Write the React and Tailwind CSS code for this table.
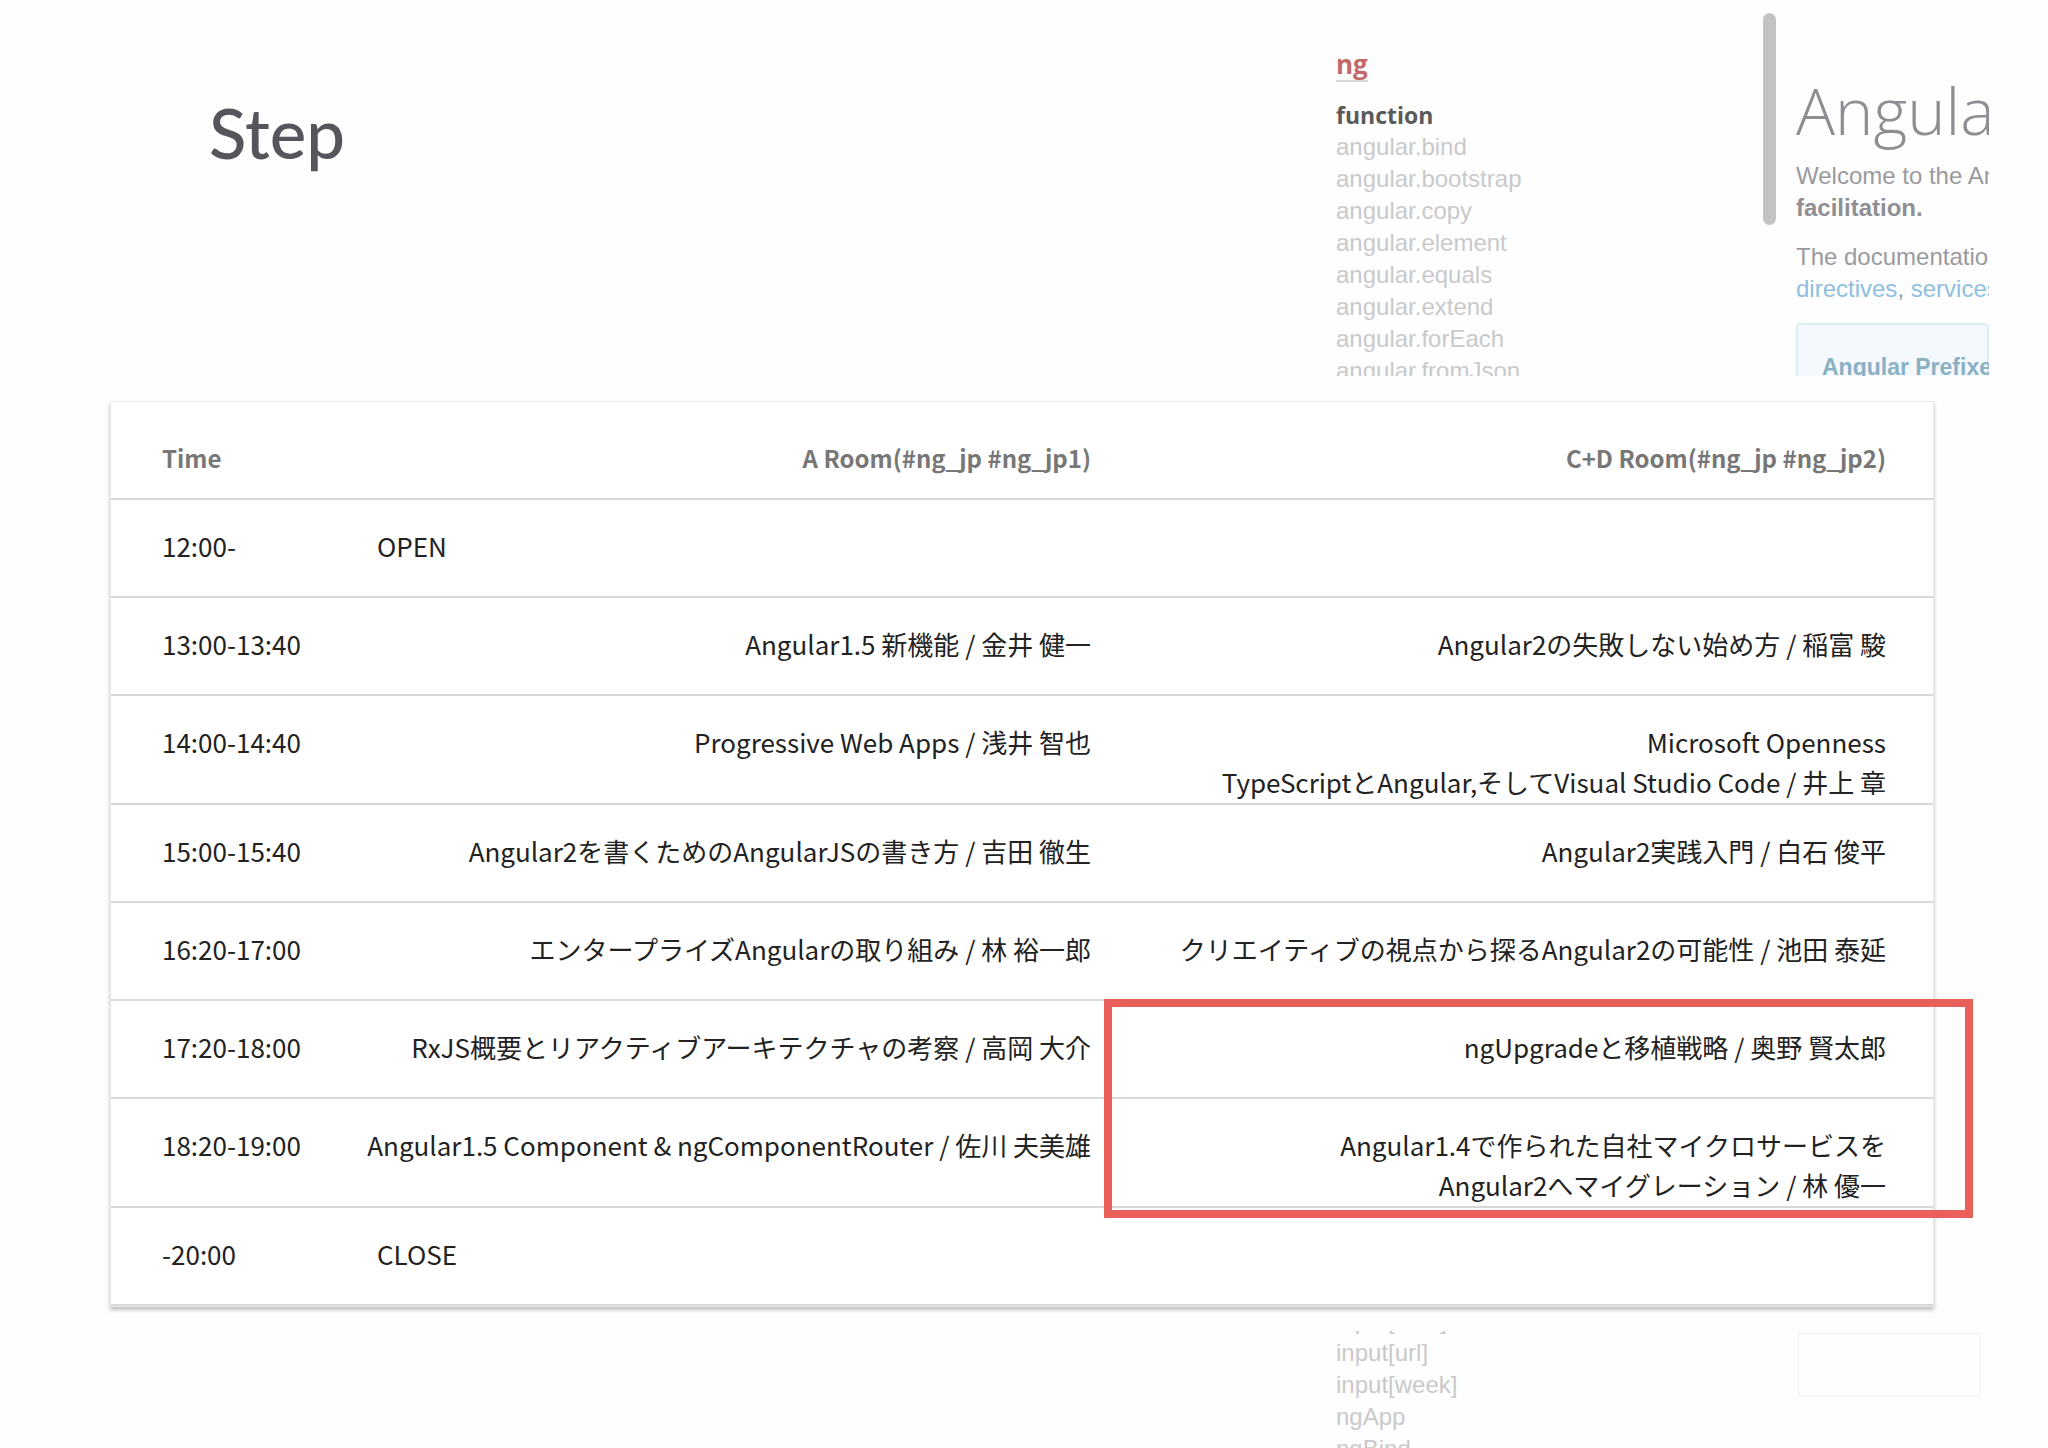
import React from 'react';

const sessions = [
  { time: '12:00-', single: 'OPEN' },
  { time: '13:00-13:40', a: ['Angular1.5 新機能 / 金井 健一'], b: ['Angular2の失敗しない始め方 / 稲富 駿'] },
  {
    time: '14:00-14:40',
    a: ['Progressive Web Apps / 浅井 智也'],
    b: ['Microsoft Openness', 'TypeScriptとAngular,そしてVisual Studio Code / 井上 章'],
  },
  { time: '15:00-15:40', a: ['Angular2を書くためのAngularJSの書き方 / 吉田 徹生'], b: ['Angular2実践入門 / 白石 俊平'] },
  { time: '16:20-17:00', a: ['エンタープライズAngularの取り組み / 林 裕一郎'], b: ['クリエイティブの視点から探るAngular2の可能性 / 池田 泰延'] },
  { time: '17:20-18:00', a: ['RxJS概要とリアクティブアーキテクチャの考察 / 高岡 大介'], b: ['ngUpgradeと移植戦略 / 奥野 賢太郎'] },
  {
    time: '18:20-19:00',
    a: ['Angular1.5 Component & ngComponentRouter / 佐川 夫美雄'],
    b: ['Angular1.4で作られた自社マイクロサービスを', 'Angular2へマイグレーション / 林 優一'],
  },
  { time: '-20:00', single: 'CLOSE' },
];

const apiItems = [
  'angular.bind',
  'angular.bootstrap',
  'angular.copy',
  'angular.element',
  'angular.equals',
  'angular.extend',
  'angular.forEach',
  'angular.fromJson',
];

const bottomItems = ['input[time]', 'input[url]', 'input[week]', 'ngApp', 'ngBind'];

function DocsBackdrop() {
  return (
    <div className="flex h-[376px] overflow-hidden">
      {/* side nav of the docs page */}
      <div className="w-[427px] pt-[48px]">
        <div className="inline-block border-b-2 border-[#d8d8d8] font-['Open_Sans',sans-serif] text-[26px] font-bold leading-[32px] text-[#c26a6a]">
          ng
        </div>
        <div className="mt-[17px] font-['Open_Sans',sans-serif] text-[23px] font-bold leading-[32px] text-[#5a5a5a]">
          function
        </div>
        <ul className="font-['Liberation_Sans',sans-serif] text-[24px] leading-[32px] text-[#c9c9cc]">
          {apiItems.map((item) => (
            <li key={item}>{item}</li>
          ))}
        </ul>
      </div>

      {/* scrollbar */}
      <div className="mt-[13px] h-[212px] w-[13px] rounded-full bg-[#c3c3c6]" />

      {/* docs main column, cut off at the right */}
      <div className="ml-[20px] w-[193px] overflow-hidden whitespace-nowrap pt-[76px]">
        <div className="font-['Open_Sans',sans-serif] text-[65px] font-light leading-[68px] text-[#8d8d92]">Angular</div>
        <div className="mt-[16px] font-['Liberation_Sans',sans-serif] text-[24px] leading-[32px] text-[#9a9a9e]">
          <p>Welcome to the AngularJS API docs</p>
          <p className="font-bold text-[#8f8f93]">facilitation.</p>
          <p className="mt-[17px]">The documentation is organized</p>
          <p className="text-[#8fbfe0]">
            directives<span className="text-[#9a9a9e]">, </span>services
          </p>
        </div>
        <div className="mt-[18px] h-[80px] rounded-[4px] border-2 border-[#dbeef4] bg-[#f3f9fc] pl-[24px] pt-[26px] font-['Liberation_Sans',sans-serif] text-[23px] font-bold leading-[32px] text-[#8ab0c4]">
          Angular Prefixes
        </div>
      </div>
    </div>
  );
}

function Cell({ lines }) {
  return (
    <div className="flex flex-col items-end">
      {lines.map((line) => (
        <p key={line} className="whitespace-nowrap">
          {line}
        </p>
      ))}
    </div>
  );
}

function ScheduleTable() {
  return (
    <div className="relative ml-[110px] mt-[25px] w-[1824px] border border-[#e8e8e8] bg-white shadow-[0_3px_4px_rgba(0,0,0,0.25)] font-['Noto_Sans_CJK_JP',sans-serif]">
      {/* header */}
      <div className="grid h-[98px] grid-cols-[187px_714px_767px] gap-x-[28px] border-b-2 border-[#d8d8d8] px-[51px] pt-[36px] text-[24px] font-bold leading-[40px] text-[#777]">
        <div>Time</div>
        <div className="text-right">A Room(#ng_jp #ng_jp1)</div>
        <div className="text-right">C+D Room(#ng_jp #ng_jp2)</div>
      </div>

      {sessions.map((s) => (
        <div
          key={s.time}
          className="grid min-h-[98px] grid-cols-[187px_714px_767px] gap-x-[28px] border-b-2 border-[#d8d8d8] px-[51px] pb-[1px] pt-[26px] text-[26px] leading-[40px] text-[#222] last:min-h-[101px] last:border-b-0"
        >
          <div>{s.time}</div>
          {s.single ? (
            <div className="col-span-2">{s.single}</div>
          ) : (
            <>
              <Cell lines={s.a} />
              <Cell lines={s.b} />
            </>
          )}
        </div>
      ))}

      {/* highlight around the C+D sessions at 17:20 and 18:20 */}
      <div className="pointer-events-none absolute left-[993px] top-[597px] h-[219px] w-[869px] border-[8px] border-[#e95f5a]" />
    </div>
  );
}

export default function App() {
  return (
    <div className="h-[1448px] w-[2048px] overflow-hidden bg-[#fefefe]">
      <div className="flex h-[376px]">
        <div className="w-[1336px] pl-[209px] pt-[97px]">
          <h1 className="font-['Lato',sans-serif] text-[69px] font-medium leading-[72px] text-[#54565b]">Step</h1>
        </div>
        <DocsBackdrop />
      </div>

      <ScheduleTable />

      {/* the docs list showing again under the card */}
      <div className="mt-[24px] flex h-[118px] overflow-hidden pl-[1336px]">
        <ul className="-mt-[26px] w-[462px] font-['Liberation_Sans',sans-serif] text-[24px] leading-[32px] text-[#c9c9cc]">
          {bottomItems.map((item) => (
            <li key={item}>{item}</li>
          ))}
        </ul>
        <div className="mt-[2px] h-[63px] w-[183px] border border-[#f1f1f3]" />
      </div>
    </div>
  );
}
